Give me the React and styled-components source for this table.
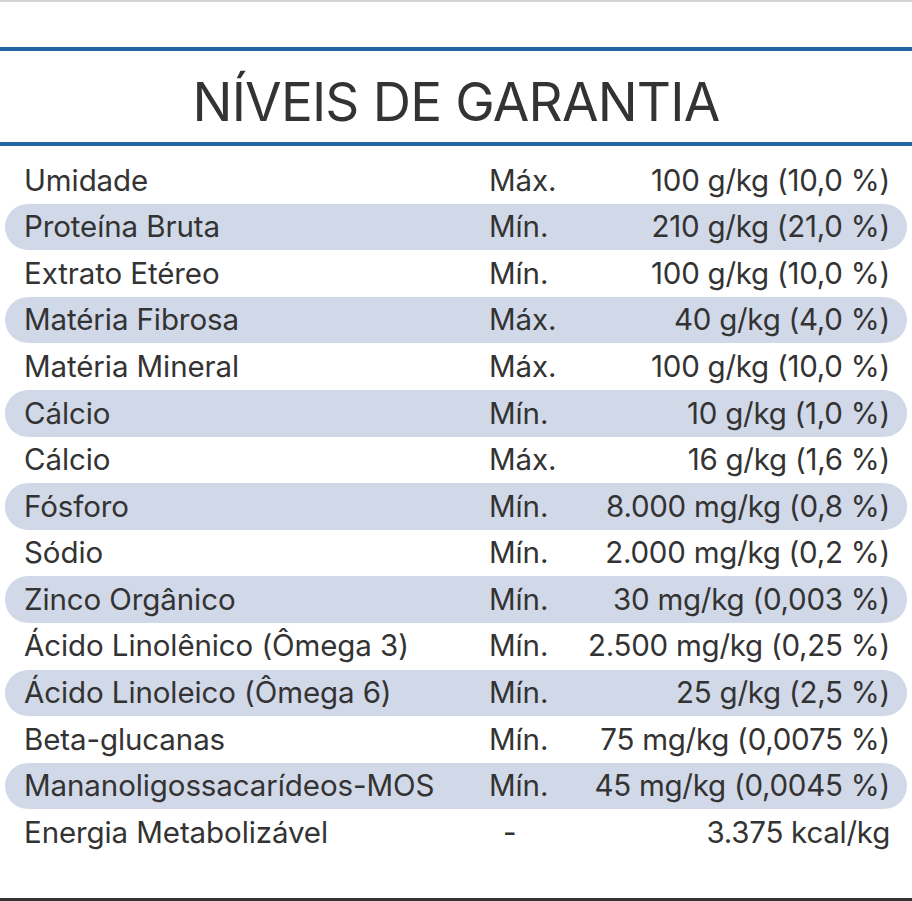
import React from "react";
import styled, { createGlobalStyle } from "styled-components";

const textColor = "#333333";
const blue = "#2466a3";
const pillColor = "#d1d8e7";

const GlobalStyle = createGlobalStyle`
  html, body {
    margin: 0;
    padding: 0;
    background: #ffffff;
  }
  body {
    font-family: Inter, "Noto Sans", sans-serif;
    color: ${textColor};
  }
`;

const Sheet = styled.div`
  width: 912px;
  height: 901px;
  box-sizing: border-box;
  display: flex;
  flex-direction: column;
  border-top: 2px solid #d4d4d4;
  border-bottom: 3px solid #333333;
  background: #fff;
`;

const Header = styled.header`
  box-sizing: border-box;
  margin-top: 45px;
  height: 99px;
  border-top: 4px solid ${blue};
  border-bottom: 4px solid ${blue};
  display: flex;
  align-items: center;
  justify-content: center;
  padding-top: 11px;
`;

const Title = styled.h1`
  margin: 0;
  font-family: Inter, "Noto Sans", sans-serif;
  font-weight: 400;
  font-size: 53px;
  letter-spacing: -0.8px;
  line-height: 1;
  color: ${textColor};
`;

const Table = styled.div`
  display: flex;
  flex-direction: column;
  padding: 11px 5px 0;
`;

const Row = styled.div`
  height: 46.6px;
  display: grid;
  grid-template-columns: 465px 90px 1fr;
  align-items: center;
  padding: 0 17px 0 19px;
  border-radius: 23px;
  background: ${(p) => (p.$shaded ? pillColor : "transparent")};
  font-size: 29.5px;
  letter-spacing: -0.1px;
  line-height: 1;
`;

const Label = styled.span`
  white-space: nowrap;
`;

const Limit = styled.span`
  padding-left: ${(p) => (p.$dash ? "14px" : "0")};
`;

const Value = styled.span`
  text-align: right;
  white-space: nowrap;
  letter-spacing: -0.25px;
`;

const rows = [
  ["Umidade", "Máx.", "100 g/kg (10,0 %)"],
  ["Proteína Bruta", "Mín.", "210 g/kg (21,0 %)"],
  ["Extrato Etéreo", "Mín.", "100 g/kg (10,0 %)"],
  ["Matéria Fibrosa", "Máx.", "40 g/kg (4,0 %)"],
  ["Matéria Mineral", "Máx.", "100 g/kg (10,0 %)"],
  ["Cálcio", "Mín.", "10 g/kg (1,0 %)"],
  ["Cálcio", "Máx.", "16 g/kg (1,6 %)"],
  ["Fósforo", "Mín.", "8.000 mg/kg (0,8 %)"],
  ["Sódio", "Mín.", "2.000 mg/kg (0,2 %)"],
  ["Zinco Orgânico", "Mín.", "30 mg/kg (0,003 %)"],
  ["Ácido Linolênico (Ômega 3)", "Mín.", "2.500 mg/kg (0,25 %)"],
  ["Ácido Linoleico (Ômega 6)", "Mín.", "25 g/kg (2,5 %)"],
  ["Beta-glucanas", "Mín.", "75 mg/kg (0,0075 %)"],
  ["Mananoligossacarídeos-MOS", "Mín.", "45 mg/kg (0,0045 %)"],
  ["Energia Metabolizável", "-", "3.375 kcal/kg"],
];

export default function App() {
  return (
    <>
      <GlobalStyle />
      <Sheet>
        <Header>
          <Title>NÍVEIS DE GARANTIA</Title>
        </Header>
        <Table>
          {rows.map(([label, limit, value], i) => (
            <Row key={i} $shaded={i % 2 === 1}>
              <Label>{label}</Label>
              <Limit $dash={limit === "-"}>{limit}</Limit>
              <Value>{value}</Value>
            </Row>
          ))}
        </Table>
      </Sheet>
    </>
  );
}
